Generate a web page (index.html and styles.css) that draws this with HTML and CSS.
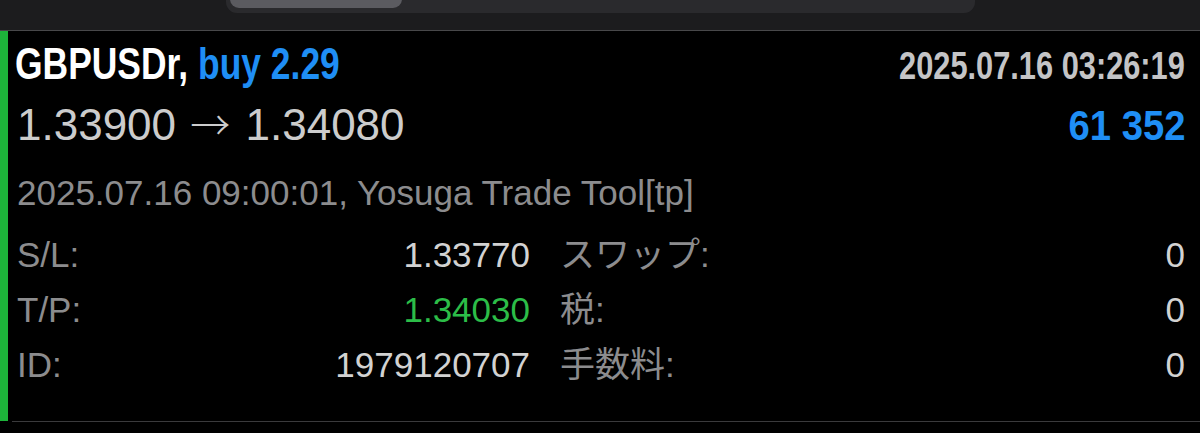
FILE: index.html
```html
<!DOCTYPE html>
<html lang="ja">

<head>
    <meta charset="UTF-8">
    <meta name="viewport" content="width=device-width, initial-scale=1.0">
    <title>Position</title>
    <link rel="stylesheet" href="styles.css">
</head>

<body>
    <header class="topbar">
        <div class="segments">
            <div class="segment active"></div>
        </div>
    </header>

    <div class="trade">
        <div class="trade-head">
            <div class="symbol">GBPUSDr, <span class="side">buy 2.29</span></div>
            <div class="opened">2025.07.16 03:26:19</div>
        </div>
        <div class="trade-price">
            <div class="prices">1.33900 <span class="arrow">→</span> 1.34080</div>
            <div class="profit">61 352</div>
        </div>
        <div class="comment">2025.07.16 09:00:01, Yosuga Trade Tool[tp]</div>

        <div class="details">
            <span class="label">S/L:</span>
            <span class="value">1.33770</span>
            <span class="label second">スワップ:</span>
            <span class="value">0</span>

            <span class="label">T/P:</span>
            <span class="value green">1.34030</span>
            <span class="label second">税:</span>
            <span class="value">0</span>

            <span class="label">ID:</span>
            <span class="value">1979120707</span>
            <span class="label second">手数料:</span>
            <span class="value">0</span>
        </div>
    </div>

    <div class="after"></div>
</body>

</html>
```

FILE: styles.css
```css
body {
    margin: 0;
    padding: 0;
    background-color: #000;
    font-family: "Liberation Sans", "Noto Sans CJK JP", Arial, sans-serif;
    overflow: hidden;
}

.topbar {
    height: 30px;
    background-color: #1c1c1e;
    border-bottom: 1px solid #48484a;
    display: flex;
    padding-left: 226px;
}

.segments {
    width: 749px;
    height: 33px;
    margin-top: -20px;
    background-color: #2a2a2d;
    border-radius: 11px;
    padding: 0 4px;
    box-sizing: border-box;
    display: flex;
}

.segment.active {
    width: 172px;
    height: 28px;
    background-color: #5b5b60;
    border-radius: 9px;
}

.trade {
    height: 390px;
    box-sizing: border-box;
    border-left: 8px solid #1db43a;
    padding: 0 15px 0 9px;
}

.trade-head {
    display: flex;
    justify-content: space-between;
    align-items: baseline;
    height: 66px;
    line-height: 66px;
}

.symbol {
    display: inline-block;
    font-size: 44px;
    font-weight: bold;
    color: #fff;
    margin-left: -2px;
    transform: scaleX(0.805);
    transform-origin: left center;
    white-space: nowrap;
}

.side {
    color: #1f8ef5;
}

.opened {
    display: inline-block;
    font-size: 38px;
    font-weight: bold;
    color: #c4c4c6;
    transform: scaleX(0.81);
    transform-origin: right center;
    white-space: nowrap;
}

.trade-price {
    display: flex;
    justify-content: space-between;
    align-items: baseline;
    height: 53px;
    line-height: 53px;
}

.prices {
    font-size: 44px;
    color: #cccccc;
    white-space: nowrap;
}

.arrow {
    font-family: "Noto Sans CJK JP", sans-serif;
    font-size: 40px;
    font-weight: 300;
    margin: 0 3px 0 2px;
}

.profit {
    display: inline-block;
    font-size: 42px;
    font-weight: bold;
    color: #1f8ef5;
    transform: scaleX(0.91);
    transform-origin: right center;
}

.comment {
    font-size: 35px;
    color: #8c8c8e;
    margin-top: 15px;
    height: 55px;
    line-height: 55px;
}

.details {
    display: grid;
    grid-template-columns: 90px 423px 210px 1fr;
    grid-auto-rows: 55px;
    line-height: 55px;
    margin-top: 7px;
    font-size: 35px;
}

.details .label {
    color: #8c8c8e;
}

.details .label.second {
    padding-left: 30px;
}

.details .value {
    text-align: right;
    color: #d2d2d2;
}

.details .value.green {
    color: #2cbd48;
}

.after {
    height: 11px;
    margin-left: 12px;
    border-top: 1px solid #3a3a3c;
}
```
